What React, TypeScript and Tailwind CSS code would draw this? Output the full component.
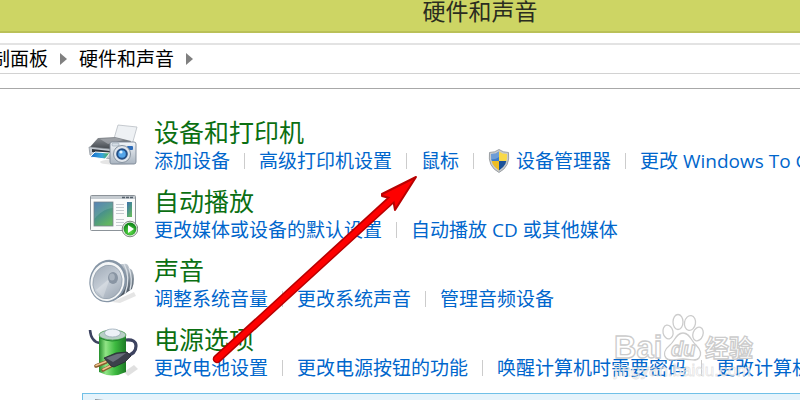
import React from 'react';

interface Task {
  label: string;
  shield?: boolean;
}

interface Category {
  title: string;
  icon: React.ReactNode;
  tasks: Task[];
}

const PrinterIcon = () => (
  <svg width="50" height="50" viewBox="0 0 50 50" aria-hidden="true">
    <defs>
      <linearGradient id="printerTop" x1="0" y1="0" x2="0" y2="1">
        <stop offset="0" stopColor="#8d9196" />
        <stop offset="1" stopColor="#3d4248" />
      </linearGradient>
      <linearGradient id="cameraBody" x1="0" y1="0" x2="0" y2="1">
        <stop offset="0" stopColor="#f4f7fa" />
        <stop offset="1" stopColor="#a9b4c0" />
      </linearGradient>
      <linearGradient id="photo" x1="0" y1="0" x2="1" y2="0">
        <stop offset="0" stopColor="#1668c8" />
        <stop offset="0.6" stopColor="#37a6dc" />
        <stop offset="1" stopColor="#4fae3b" />
      </linearGradient>
    </defs>
    <ellipse cx="30" cy="42" rx="18" ry="3" fill="#000" opacity="0.1" />
    <path d="M30 5 L49 7 L44 25 L25 22 Z" fill="#eef1f4" stroke="#b9bec4" strokeWidth="0.8" />
    <path d="M10 18 L27 17 L43 21 L41 26 L22 30 L2 27 Z" fill="url(#printerTop)" />
    <path d="M12 19 L28 18 L36 20 L20 24 Z" fill="#a9adb2" opacity="0.7" />
    <path d="M1 27 L22 29 L23 39 L2 35 Z" fill="#c5cbd2" stroke="#8a9098" strokeWidth="0.7" />
    <path d="M4 29 L22 31 L22 34 L4 32 Z" fill="#30363e" />
    <path d="M7 32 L22 33 L17 39 L2 37 Z" fill="url(#photo)" stroke="#fff" strokeWidth="1" />
    <rect x="22" y="22" width="26" height="22" rx="2" fill="url(#cameraBody)" stroke="#7d8996" strokeWidth="0.9" />
    <rect x="24" y="23" width="7" height="3" rx="1" fill="#d6dee6" stroke="#8794a2" strokeWidth="0.5" />
    <rect x="39" y="26" width="6" height="4" rx="1" fill="#2c6bb8" />
    <circle cx="34" cy="34" r="8.500" fill="#e1e6ec" stroke="#8793a0" strokeWidth="1" />
    <circle cx="34" cy="34" r="5.800" fill="#244f86" />
    <circle cx="34" cy="34" r="3.800" fill="#54a5ea" />
    <circle cx="33" cy="32" r="1.600" fill="#dff1ff" />
  </svg>
);

const AutoplayIcon = () => (
  <svg width="50" height="50" viewBox="0 -2 50 50" aria-hidden="true">
    <defs>
      <linearGradient id="autoPane" x1="0" y1="0" x2="0.6" y2="1">
        <stop offset="0" stopColor="#3d6faa" />
        <stop offset="0.5" stopColor="#48908c" />
        <stop offset="1" stopColor="#62b562" />
      </linearGradient>
      <radialGradient id="playBall" cx="0.5" cy="0.7" r="0.6">
        <stop offset="0" stopColor="#62e04c" />
        <stop offset="1" stopColor="#148a1b" />
      </radialGradient>
    </defs>
    <rect x="2.500" y="4.500" width="45" height="35" rx="1" fill="#fafbfb" stroke="#8c9399" />
    <rect x="3" y="5" width="44" height="3" fill="#c5cbd0" />
    <path d="M34 6.500 h3 M38 6.500 h3 M42 6.500 h3" stroke="#56616c" strokeWidth="1.400" />
    <rect x="6" y="11" width="19" height="24" fill="url(#autoPane)" stroke="#7b858e" strokeWidth="0.8" />
    <path d="M6.500 11.500 H24.500 V17 C17 18 11 22 6.500 28 Z" fill="#fff" opacity="0.13" />
    <path d="M28 13.500 h8 M28 16.500 h8 M28 19.500 h8 M28 22.500 h8 M28 28.500 h8 M28 31.500 h8 M28 34.500 h6" stroke="#c6cbd0" strokeWidth="1.200" />
    <rect x="39" y="11" width="5" height="15" fill="url(#autoPane)" />
    <circle cx="42" cy="38" r="7.800" fill="#e8ece8" stroke="#747e76" strokeWidth="0.9" />
    <circle cx="42" cy="38" r="6.400" fill="url(#playBall)" />
    <path d="M40 34 L46 38 L40 42 Z" fill="#fff" />
  </svg>
);

const SpeakerIcon = () => (
  <svg width="50" height="50" viewBox="0 0 50 50" aria-hidden="true">
    <defs>
      <linearGradient id="cone" x1="0" y1="0" x2="1" y2="1">
        <stop offset="0" stopColor="#9da8b5" />
        <stop offset="0.5" stopColor="#c5cdd6" />
        <stop offset="1" stopColor="#98a3b0" />
      </linearGradient>
      <linearGradient id="magnet" x1="0" y1="0" x2="0" y2="1">
        <stop offset="0" stopColor="#c3cbd3" />
        <stop offset="0.5" stopColor="#77838f" />
        <stop offset="1" stopColor="#3e4852" />
      </linearGradient>
    </defs>
    <path d="M24 44 L46 34 L48 38 L32 45 Z" fill="#000" opacity="0.1" />
    <path d="M27 6 L36 6 Q40 5 41 10 L44 12 Q48 21 44 31 L38 35 L30 40 Z" fill="url(#magnet)" />
    <path d="M36 6 Q43 19 37 36 M41 10 Q45 21 42 32" stroke="#dbe1e7" strokeWidth="1.300" fill="none" />
    <ellipse cx="20" cy="23" rx="18.500" ry="21.500" transform="rotate(14 20 23)" fill="#8796a6" />
    <ellipse cx="19.500" cy="23.500" rx="16.800" ry="19.600" transform="rotate(14 19.500 23.500)" fill="#f4f6f7" />
    <ellipse cx="19.500" cy="24" rx="14.500" ry="17" transform="rotate(14 19.500 24)" fill="url(#cone)" stroke="#8b98a6" strokeWidth="0.6" />
    <path d="M8 32 L22 20 L15 40 Z" fill="#fff" opacity="0.25" />
    <ellipse cx="25" cy="20" rx="5" ry="6" fill="#8995a3" />
    <ellipse cx="24" cy="19" rx="2.800" ry="3.500" fill="#aab4bf" />
  </svg>
);

const PowerIcon = () => (
  <svg width="50" height="50" viewBox="0 -2 50 50" aria-hidden="true">
    <defs>
      <linearGradient id="cell" x1="0" y1="0" x2="1" y2="0">
        <stop offset="0" stopColor="#248f2c" />
        <stop offset="0.25" stopColor="#91e486" />
        <stop offset="0.6" stopColor="#3dba40" />
        <stop offset="1" stopColor="#1c7a25" />
      </linearGradient>
    </defs>
    <path d="M36 43 L46 36 L50 40 L40 47 Z" fill="#000" opacity="0.12" />
    <path d="M2 1 Q3 13 12 14" fill="none" stroke="#3d4360" strokeWidth="2.600" />
    <path d="M38 11 Q48 10 48 17 Q48 25 38 27" fill="none" stroke="#3d4360" strokeWidth="3.200" />
    <path d="M11 6 V43 Q24 50 38 43 V6 Z" fill="url(#cell)" />
    <ellipse cx="24.500" cy="6" rx="13.500" ry="5" fill="#b7cfc4" stroke="#4f9a58" strokeWidth="0.8" />
    <ellipse cx="24.500" cy="4" rx="8" ry="4" fill="#edf1f7" stroke="#9aaab9" strokeWidth="0.8" />
    <path d="M12 9 Q24 15 37 9" fill="none" stroke="#1f8a2b" strokeWidth="1" />
    <path d="M8 37 L18 33 M15 41 L25 36" stroke="#8a5c2c" strokeWidth="3.600" strokeLinecap="round" />
    <path d="M8 36.500 L18 32.500 M15 40.500 L25 35.500" stroke="#efc08c" strokeWidth="1.600" strokeLinecap="round" />
    <path d="M16 29 L28 24 L39 23 L43 27 L37 33 L26 38 L23 37 Z" fill="#3c404b" stroke="#262932" strokeWidth="0.8" />
    <path d="M18 29 L29 25 L38 24 L30 30 L25 33 Z" fill="#6a6f7c" />
  </svg>
);

const ShieldIcon = () => (
  <svg className="mr-1.5 shrink-0" width="22" height="24" viewBox="0 0 22 24" aria-hidden="true">
    <defs>
      <clipPath id="shieldInner">
        <path d="M11 2.500 Q14 5 19 5 Q20 16 11 21.500 Q2 16 3 5 Q8 5 11 2.500 Z" />
      </clipPath>
    </defs>
    <path d="M11 0.500 Q15 3.500 20.500 3.500 Q22.500 17.500 11 23.500 Q-0.500 17.500 1.500 3.500 Q7 3.500 11 0.500 Z" fill="#c8cbcd" stroke="#8c9195" strokeWidth="0.8" />
    <g clipPath="url(#shieldInner)">
      <rect x="0" y="0" width="11" height="12" fill="#3d7cc9" />
      <rect x="11" y="0" width="11" height="12" fill="#f9d949" />
      <rect x="0" y="12" width="11" height="12" fill="#edbd25" />
      <rect x="11" y="12" width="11" height="12" fill="#1c5299" />
      <path d="M3 4 Q9 5 11 2 V8 Q7 11 3 10 Z" fill="#fff" opacity="0.25" />
    </g>
  </svg>
);

const DisplayIcon = () => (
  <svg width="50" height="50" viewBox="0 0 50 50" aria-hidden="true">
    <path d="M6 1 L15 2 L44 7 V36 L6 32 Z" fill="#8b9298" />
    <path d="M9 5 L41 10 V32 L9 28 Z" fill="#3c87c8" />
    <path d="M18 38 H34 V43 H18 Z" fill="#b3b9be" />
  </svg>
);

const Chevron = () => (
  <svg className="shrink-0" width="7" height="12" viewBox="0 0 7 12" aria-hidden="true">
    <path d="M0 0 L7 6 L0 12 Z" fill="#808080" />
  </svg>
);

const categories: Category[] = [
  {
    title: '设备和打印机',
    icon: <PrinterIcon />,
    tasks: [
      { label: '添加设备' },
      { label: '高级打印机设置' },
      { label: '鼠标' },
      { label: '设备管理器', shield: true },
      { label: '更改 Windows To Go 启动选项' },
    ],
  },
  {
    title: '自动播放',
    icon: <AutoplayIcon />,
    tasks: [{ label: '更改媒体或设备的默认设置' }, { label: '自动播放 CD 或其他媒体' }],
  },
  {
    title: '声音',
    icon: <SpeakerIcon />,
    tasks: [{ label: '调整系统音量' }, { label: '更改系统声音' }, { label: '管理音频设备' }],
  },
  {
    title: '电源选项',
    icon: <PowerIcon />,
    tasks: [
      { label: '更改电池设置' },
      { label: '更改电源按钮的功能' },
      { label: '唤醒计算机时需要密码' },
      { label: '更改计算机睡眠时间' },
    ],
  },
];

const CategoryRow: React.FC<{ category: Category }> = ({ category }) => (
  <section className="flex gap-4">
    <div className="mt-1 shrink-0">{category.icon}</div>
    <div>
      <h2 className="text-[25px] leading-8 text-[#0b6f12]">
        <a href="#" className="hover:underline">{category.title}</a>
      </h2>
      <ul className="flex text-[19px] leading-[26px] text-[#0066cc]">
        {category.tasks.map((task, i) => (
          <li key={task.label} className="flex shrink-0 items-center">
            {i > 0 && <span className="mx-3.5 h-4 w-px bg-[#cccccc]" />}
            {task.shield && <ShieldIcon />}
            <a href="#" className="whitespace-nowrap hover:underline">{task.label}</a>
          </li>
        ))}
      </ul>
    </div>
  </section>
);

const Arrow = () => (
  <svg className="pointer-events-none absolute left-[205px] top-[170px]" width="220" height="200" viewBox="0 0 220 200" aria-hidden="true">
    <path d="M12 189 L186 30" stroke="#b80000" strokeWidth="8.500" strokeLinecap="round" />
    <path d="M211 7 L177 24 L177 26 L188 29 L190 40 Z" fill="#fe0000" stroke="#b80000" strokeWidth="2" strokeLinejoin="round" />
    <path d="M12 189 L190 26.500" stroke="#fe0000" strokeWidth="5.500" strokeLinecap="round" />
  </svg>
);

const Watermark = () => (
  <svg
    className="pointer-events-none absolute left-[610px] top-[310px] font-['Liberation_Sans','Noto_Sans_CJK_SC',sans-serif]"
    width="150"
    height="76"
    viewBox="0 0 150 76"
    role="img"
    aria-label="Baidu 经验"
  >
    <g fill="#ffffff" fillOpacity="0.8" stroke="#cccccc" strokeWidth="1.300">
      <text x="4" y="48" fontSize="31" fontWeight="700">Bai</text>
      <ellipse cx="58" cy="22" rx="5" ry="7" transform="rotate(-12 58 22)" />
      <ellipse cx="68" cy="12" rx="5" ry="7.500" />
      <ellipse cx="80" cy="13" rx="5.500" ry="7.500" transform="rotate(10 80 13)" />
      <ellipse cx="88" cy="24" rx="5" ry="7" transform="rotate(20 88 24)" />
      <path d="M73 23 C66 23 65 31 60 35 C55 39 53 44 56 48 C59 52 65 49 73 49 C81 49 86 52 89 48 C92 44 90 39 86 35 C81 31 80 23 73 23 Z" />
      <text x="61" y="46" fontSize="20" fontWeight="700" fontStyle="italic">du</text>
      <text x="95" y="47" fontSize="24" fontWeight="700">经验</text>
    </g>
    <text x="4" y="66" fontSize="17" fill="#ffffff" fillOpacity="0.75" stroke="#bbbbbb" strokeOpacity="0.4" strokeWidth="0.8">
      jingyan.baidu.com
    </text>
  </svg>
);

const App: React.FC = () => {
  return (
    <div className="relative h-screen overflow-hidden bg-white font-['Open_Sans','Noto_Sans_CJK_SC',sans-serif]">
      <header className="h-[33px] border-b-2 border-[#bac158] bg-[#cdd564] pl-[20%] text-center">
        <h1 className="text-[23px] leading-[22px] text-[#2a2c20]">硬件和声音</h1>
      </header>

      <nav
        aria-label="路径"
        className="mt-2.5 flex h-[31px] items-center gap-3 border-b border-t-2 border-b-[#d2d2d2] border-t-[#e3e3e3] text-[19px] leading-7 text-black"
      >
        <a href="#" className="-ml-7 whitespace-nowrap">控制面板</a>
        <Chevron />
        <a href="#" className="whitespace-nowrap">硬件和声音</a>
        <Chevron />
      </nav>

      <main className="mt-3.5 border-t border-[#a8a8a8] pt-[27px]">
        <div className="flex flex-col gap-[11px] pl-[88px]">
          {categories.map((category) => (
            <CategoryRow key={category.title} category={category} />
          ))}
        </div>
        <div className="ml-[82px] mt-3 border border-r-0 border-[#70c0e7] bg-[#e5f3fb] px-1.5 py-1">
          <DisplayIcon />
        </div>
      </main>

      <Arrow />
      <Watermark />
    </div>
  );
};

export default App;
